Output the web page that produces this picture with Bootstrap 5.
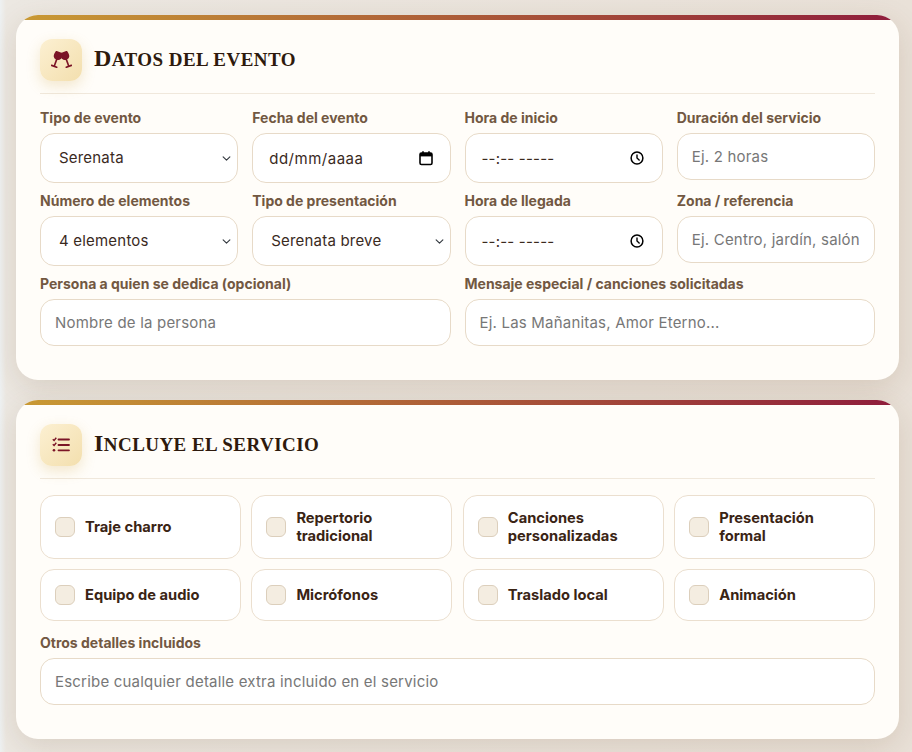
<!DOCTYPE html>
<html lang="es">
<head>
  <meta charset="UTF-8">
  <meta name="viewport" content="width=device-width, initial-scale=1.0">
  <link href="https://cdn.jsdelivr.net/npm/bootstrap@5.3.0/dist/css/bootstrap.min.css" rel="stylesheet">
  <title>Datos del evento</title>
  <style>
    body { background: linear-gradient(90deg, #eef1f2 0, #ece8e2 6px, #e9e1d8 100%); font-family: Inter, "Liberation Sans", sans-serif; color: #3a2414; }
    .page-wrap { padding: 15px 13px 13px 16px; display: flex; flex-direction: column; gap: 20px; }
    .event-card { background: #fffdf9; border-radius: 22px; padding: 24px 24px 34px; overflow: hidden; position: relative; box-shadow: 0 8px 30px rgba(105, 65, 30, .15); }
    .event-card::before { content: ""; position: absolute; left: 0; right: 0; top: 0; height: 5px; background: linear-gradient(90deg, #c99a34, #8f1d3c); }
    .section-head { display: flex; align-items: center; gap: 12px; padding-bottom: 12px; margin-bottom: 16px; border-bottom: 1px solid #f0e8dc; }
    .head-icon { width: 42px; height: 42px; border-radius: 12px; background: linear-gradient(135deg, #fcf0d2, #f3dfae); box-shadow: 0 5px 14px rgba(201, 154, 52, .22); display: flex; align-items: center; justify-content: center; }
    .section-title { font-family: "Liberation Serif", serif; text-transform: uppercase; font-weight: 700; font-size: 19px; letter-spacing: .45px; line-height: 1.2; margin: 0 0 3px; color: #2e1a0d; }
    .section-title::first-letter { font-size: 24px; }
    .field-grid { display: grid; grid-template-columns: repeat(4, 1fr); column-gap: 14px; row-gap: 10px; }
    .span-two { grid-column: span 2; }
    .field-label { display: block; font-size: 14px; font-weight: 700; line-height: 16px; color: #725842; margin-bottom: 7px; white-space: nowrap; }
    .field-input.form-control, .field-input.form-select { height: 47px; border: 1px solid #e7dac8; border-radius: 14px; background-color: #fff; font-size: 15px; letter-spacing: .2px; color: #3a2a1e; padding: 0 14px; box-shadow: none; }
    .field-input::placeholder { color: #777; opacity: 1; }
    .field-input.tall { height: 50px; padding-left: 18px; }
    .field-input.form-select { padding-right: 8px; background-position: right 5px center; background-size: 11px 9px; }
    .field-input.date-like { padding-left: 16px; background-repeat: no-repeat; background-position: right 17px center; background-size: 16px 16px; }
    .field-input.cal-bg { letter-spacing: .5px; background-position: right 16px center; }
    .cal-bg { background-image: url("data:image/svg+xml,%3Csvg xmlns='http://www.w3.org/2000/svg' viewBox='0 0 16 16'%3E%3Crect x='2' y='3' width='12' height='11.5' rx='1.4' fill='none' stroke='%23000' stroke-width='1.6'/%3E%3Crect x='2' y='3' width='12' height='3.4' fill='%23000'/%3E%3Cpath d='M5 1.2v2.5M11 1.2v2.5' stroke='%23000' stroke-width='1.6'/%3E%3C/svg%3E"); }
    .clock-bg { background-image: url("data:image/svg+xml,%3Csvg xmlns='http://www.w3.org/2000/svg' viewBox='0 0 16 16'%3E%3Ccircle cx='8' cy='8' r='5.9' fill='none' stroke='%23000' stroke-width='1.5'/%3E%3Cpath d='M8 4.5V8l2.6 2.4' fill='none' stroke='%23000' stroke-width='1.4'/%3E%3C/svg%3E"); }
    .tile-grid { display: grid; grid-template-columns: repeat(4, 1fr); gap: 10px 10.6px; margin-bottom: 14px; }
    .check-tile { display: flex; align-items: center; gap: 10px; min-height: 52px; padding: 13px 14px; background: #fff; border: 1px solid #ebdfcf; border-radius: 14px; font-size: 14.7px; font-weight: 700; line-height: 18px; color: #3a2414; margin: 0; }
    .check-tile .form-check-input { flex: none; width: 20px; height: 20px; margin: 0; background-color: #f4ede1; border: 1px solid #dccfbc; border-radius: 6px; }
  </style>
</head>
<body>
  <div class="page-wrap">

    <!-- Datos del evento -->
    <section class="event-card">
      <div class="section-head">
        <div class="head-icon">
          <svg width="21" height="18" viewBox="0 0 21 18" fill="#7b1426">
            <g transform="rotate(20 6 9)">
              <path d="M2 .6h7c.8 2.800 1 4.700.2 6.300-.7 1.300-1.800 2-3.700 2s-3-.7-3.700-2C1 5.300 1.200 3.400 2 .6z"/>
              <rect x="4.700" y="8" width="1.600" height="7.500"/>
              <rect x="2" y="15" width="7" height="1.700" rx=".8"/>
            </g>
            <g transform="rotate(-20 15 9)">
              <path d="M12 .6h7c.8 2.800 1 4.700.2 6.300-.7 1.300-1.800 2-3.700 2s-3-.7-3.700-2c-.8-1.600-.6-3.500.2-6.300z"/>
              <rect x="14.700" y="8" width="1.600" height="7.500"/>
              <rect x="12" y="15" width="7" height="1.700" rx=".8"/>
            </g>
          </svg>
        </div>
        <h2 class="section-title">Datos del evento</h2>
      </div>
      <form class="field-grid">
        <div>
          <label class="field-label">Tipo de evento</label>
          <select class="form-select field-input tall"><option>Serenata</option></select>
        </div>
        <div>
          <label class="field-label">Fecha del evento</label>
          <input type="text" class="form-control field-input tall date-like cal-bg" value="dd/mm/aaaa">
        </div>
        <div>
          <label class="field-label">Hora de inicio</label>
          <input type="text" class="form-control field-input tall date-like clock-bg" value="--:-- -----">
        </div>
        <div>
          <label class="field-label">Duración del servicio</label>
          <input type="text" class="form-control field-input" placeholder="Ej. 2 horas">
        </div>
        <div>
          <label class="field-label">Número de elementos</label>
          <select class="form-select field-input tall"><option>4 elementos</option></select>
        </div>
        <div>
          <label class="field-label">Tipo de presentación</label>
          <select class="form-select field-input tall"><option>Serenata breve</option></select>
        </div>
        <div>
          <label class="field-label">Hora de llegada</label>
          <input type="text" class="form-control field-input tall date-like clock-bg" value="--:-- -----">
        </div>
        <div>
          <label class="field-label">Zona / referencia</label>
          <input type="text" class="form-control field-input" placeholder="Ej. Centro, jardín, salón">
        </div>
        <div class="span-two">
          <label class="field-label">Persona a quien se dedica (opcional)</label>
          <input type="text" class="form-control field-input" placeholder="Nombre de la persona">
        </div>
        <div class="span-two">
          <label class="field-label">Mensaje especial / canciones solicitadas</label>
          <input type="text" class="form-control field-input" placeholder="Ej. Las Mañanitas, Amor Eterno...">
        </div>
      </form>
    </section>

    <!-- Incluye el servicio -->
    <section class="event-card">
      <div class="section-head">
        <div class="head-icon">
          <svg width="18" height="16" viewBox="0 0 18 16" fill="none" stroke="#7b1426">
            <path d="M.8 2.200l1.300 1.300L4.300 .8M.8 7.200l1.300 1.300 2.200-2.700" stroke-width="1.400"/>
            <circle cx="2" cy="13.200" r="1.300" fill="#7b1426" stroke="none"/>
            <path d="M6.500 2.500H17M6.500 8H17M6.500 13.300H17" stroke-width="1.800" stroke-linecap="round"/>
          </svg>
        </div>
        <h2 class="section-title">Incluye el servicio</h2>
      </div>
      <div class="tile-grid">
        <label class="check-tile"><input class="form-check-input" type="checkbox">Traje charro</label>
        <label class="check-tile"><input class="form-check-input" type="checkbox">Repertorio tradicional</label>
        <label class="check-tile"><input class="form-check-input" type="checkbox">Canciones personalizadas</label>
        <label class="check-tile"><input class="form-check-input" type="checkbox">Presentación formal</label>
        <label class="check-tile"><input class="form-check-input" type="checkbox">Equipo de audio</label>
        <label class="check-tile"><input class="form-check-input" type="checkbox">Micrófonos</label>
        <label class="check-tile"><input class="form-check-input" type="checkbox">Traslado local</label>
        <label class="check-tile"><input class="form-check-input" type="checkbox">Animación</label>
      </div>
      <label class="field-label">Otros detalles incluidos</label>
      <input type="text" class="form-control field-input" placeholder="Escribe cualquier detalle extra incluido en el servicio">
    </section>

  </div>
  <script src="https://cdn.jsdelivr.net/npm/bootstrap@5.3.0/dist/js/bootstrap.bundle.min.js"></script>
</body>
</html>
